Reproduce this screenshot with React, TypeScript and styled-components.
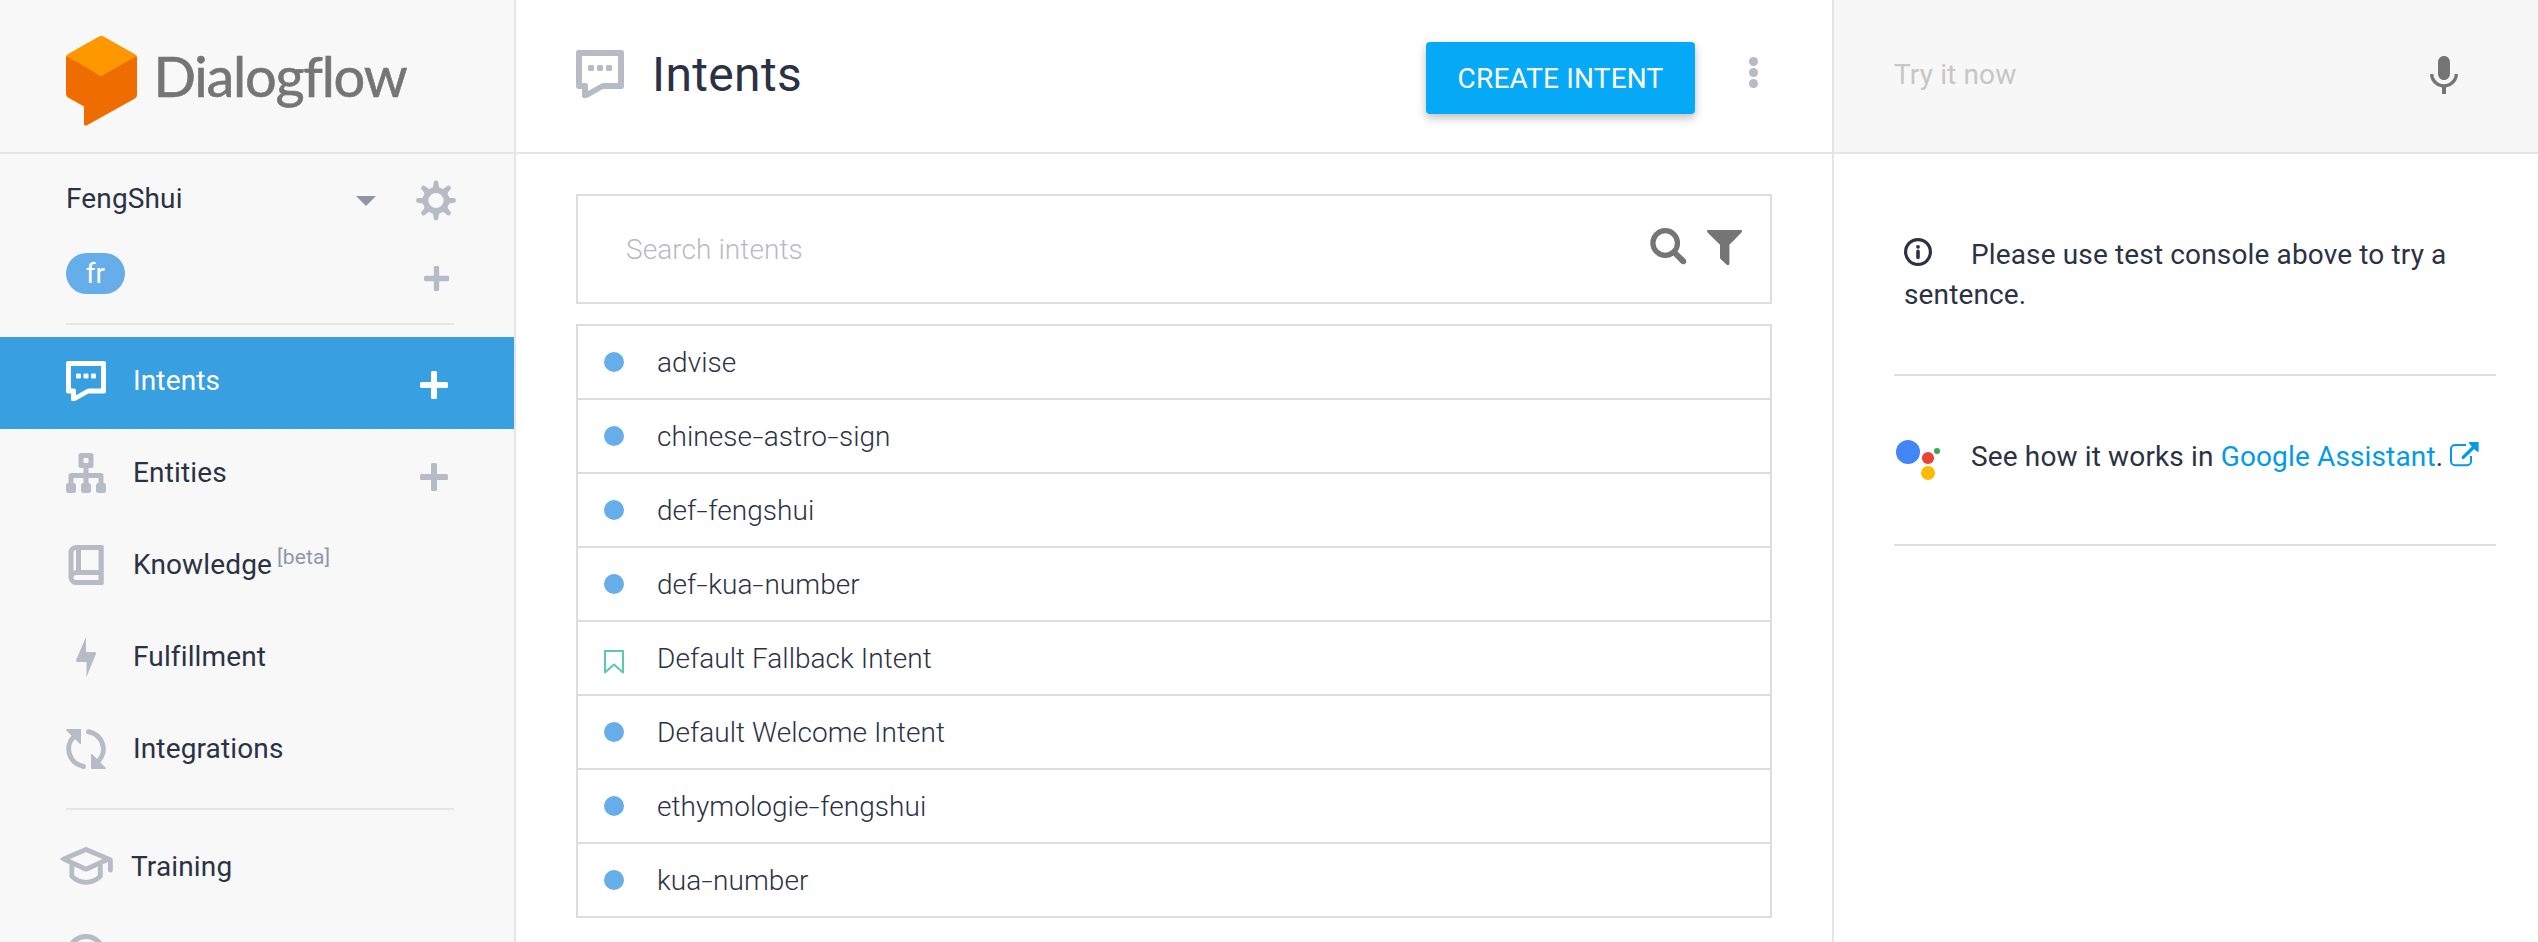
import React from "react";
import styled, { createGlobalStyle } from "styled-components";

const GlobalStyle = createGlobalStyle`
  *, *::before, *::after { box-sizing: border-box; }
  body { margin: 0; background: #fff; overflow: hidden; }
  #root { font-family: Roboto, "Liberation Sans", sans-serif; font-size: 28px; letter-spacing: 0.14px; color: #2b3244; }
  svg { display: block; flex: none; }
`;

const Page = styled.div`
  display: grid;
  grid-template-columns: 516px 1318px 1fr;
  height: 942px;
  overflow: hidden;
`;

const Column = styled.div<{ $tint?: boolean; $edge?: boolean }>`
  display: flex;
  flex-direction: column;
  min-width: 0;
  height: 942px;
  overflow: hidden;
  background: ${(p) => (p.$tint ? "#f8f8f8" : "#fff")};
  border-right: ${(p) => (p.$edge ? "2px solid #e5e5e5" : "none")};
`;

const Header = styled.header<{ $tint?: boolean }>`
  display: flex;
  flex: none;
  height: 154px;
  border-bottom: 2px solid #e5e5e5;
  background: ${(p) => (p.$tint ? "#f7f7f7" : "transparent")};
`;

/* Sidebar */
const Brand = styled.div`
  display: flex;
  align-items: flex-start;
  padding: 35px 0 0 66px;
`;
const BrandName = styled.span`
  font-family: Lato, sans-serif;
  font-size: 56px;
  line-height: 68px;
  letter-spacing: -1.25px;
  color: #757575;
  margin: 7px 0 0 16.5px;
  -webkit-text-stroke: 0.6px #757575;
`;
const Agent = styled.div`
  display: flex;
  flex: none;
  height: 99px;
  padding: 26px 58px 0 66px;
`;
const AgentName = styled.span`
  flex: 1;
  line-height: 37px;
`;
const Caret = styled.span`
  width: 0;
  height: 0;
  margin: 16px 40px 0 0;
  border: 10px solid transparent;
  border-top-color: #8f96aa;
  border-bottom-width: 0;
`;
const Language = styled.div`
  display: flex;
  flex: none;
  justify-content: space-between;
  margin: 0 60px 0 66px;
  padding-right: 5.5px;
  height: 72px;
  border-bottom: 2px solid #e5e5e5;
`;
const Pill = styled.span`
  width: 59px;
  height: 41px;
  border-radius: 20.5px;
  background: #66aee9;
  color: #fff;
  line-height: 41px;
  text-align: center;
`;
const LanguageAdd = styled.span`
  margin-top: 13px;
  color: #b7bbc6;
`;
const Nav = styled.nav`
  display: flex;
  flex-direction: column;
  flex: none;
  padding-top: 12px;
`;
const NavItem = styled.a<{ $active?: boolean }>`
  display: flex;
  align-items: flex-start;
  flex: none;
  height: 92px;
  padding: 24px 66px 0 66px;
  color: ${(p) => (p.$active ? "#fff" : "#2b3244")};
  background: ${(p) => (p.$active ? "#389fe0" : "transparent")};
  > svg { color: ${(p) => (p.$active ? "#fff" : "#b7bbc6")}; }
`;
const NavLabel = styled.span<{ $tight?: boolean }>`
  flex: 1;
  margin-left: ${(p) => (p.$tight ? 18 : 27)}px;
  line-height: 39px;
  white-space: nowrap;
`;
const Beta = styled.sup`
  margin-left: 5px;
  font-size: 21px;
  line-height: 0;
  vertical-align: 10px;
  color: #8f96ae;
`;
const Add = styled.span<{ $active?: boolean }>`
  margin: 10px 0 0;
  color: ${(p) => (p.$active ? "#fff" : "#b7bbc6")};
`;
const WideIcon = styled.span`
  margin: 0 0 0 -6px;
  color: #b7bbc6;
`;
const RaisedIcon = styled.span`
  margin-top: -5px;
  color: #b7bbc6;
`;
const NavRule = styled.hr`
  flex: none;
  width: 388px;
  height: 2px;
  margin: 11px 0 13px 66px;
  border: 0;
  background: #e5e5e5;
`;

/* Intents panel */
const Title = styled.h1`
  flex: 1;
  margin: 0 0 0 28px;
  padding-top: 47px;
  font-size: 48px;
  font-weight: 400;
  line-height: 56px;
  letter-spacing: 0.35px;
`;
const HeaderIcon = styled.span`
  margin: 50px 0 0 60px;
  color: #b7bbc6;
`;
const CreateButton = styled.button`
  width: 269px;
  height: 72px;
  margin-top: 42px;
  padding: 1px 0 0;
  border: 0;
  border-radius: 4px;
  background: #05a9f6;
  box-shadow: 0 4px 10px rgba(0, 0, 0, 0.26);
  color: #fff;
  font: inherit;
  letter-spacing: 0.18px;
`;
const Menu = styled.span`
  display: flex;
  flex-direction: column;
  gap: 2.3px;
  margin: 56.5px 74px 0 54px;
`;
const MenuDot = styled.i`
  width: 9px;
  height: 9px;
  border-radius: 50%;
  background: #b7bbc6;
`;
const SearchBox = styled.div`
  display: flex;
  flex: none;
  width: 1196px;
  height: 110px;
  margin: 40px 0 20px 60px;
  padding: 32px 28px 0 48px;
  border: 2px solid #dedede;
  color: #757575;
`;
const Placeholder = styled.span`
  flex: 1;
  margin-top: 3px;
  font-weight: 300;
  line-height: 37px;
  letter-spacing: 0.08px;
  color: #b7bbc6;
`;
const FilterSlot = styled.span`
  margin: 2px 0 0 20px;
`;
const List = styled.ul`
  flex: none;
  width: 1196px;
  margin: 0 0 0 60px;
  padding: 0;
  list-style: none;
  border: 2px solid #dcdcdc;
`;
const Row = styled.li`
  display: flex;
  align-items: center;
  height: 74px;
  padding-left: 26px;
  font-weight: 300;
  letter-spacing: 0.04px;
  border-bottom: 2px solid #dcdcdc;
  &:last-child { height: 72px; border-bottom: 0; }
`;
const Marker = styled.span<{ $low?: boolean }>`
  display: flex;
  width: 20px;
  margin: ${(p) => (p.$low ? 8 : 0)}px 33px 0 0;
`;
const Dot = styled.i`
  width: 20px;
  height: 20px;
  border-radius: 50%;
  background: #66aee9;
`;
const Hyphen = styled.span`
  display: inline-block;
  margin: 0 1.9px;
  transform: scaleX(1.45);
`;

/* Test console */
const TryField = styled.div`
  flex: 1;
  padding: 56px 0 0 60px;
  line-height: 37px;
  color: #c6c6c6;
`;
const MicSlot = styled.span`
  margin: 56px 80px 0 0;
  color: #757575;
`;
const Hint = styled.p`
  flex: none;
  width: 602px;
  height: 222px;
  margin: 0 0 0 60px;
  padding: 81px 20px 0 10px;
  line-height: 40px;
  border-bottom: 2px solid #dedede;
  > svg { display: inline-block; vertical-align: -2px; margin-right: 39px; }
`;
const Assistant = styled.div`
  display: flex;
  flex: none;
  width: 602px;
  height: 170px;
  margin-left: 60px;
  padding: 64px 0 0 2px;
  border-bottom: 2px solid #dedede;
`;
const AssistantText = styled.span`
  width: 479px;
  margin: -2px 0 0 30px;
  line-height: 37px;
  white-space: nowrap;
`;
const Link = styled.a`
  color: #039be5;
`;
const ExternalSlot = styled.span`
  margin: 2px 0 0;
  color: #039be5;
`;

const ChatIcon = ({ size = 40 }: { size?: number }) => (
  <svg width={size} height={size} viewBox="0 0 16 16" fill="currentColor">
    <path fillRule="evenodd" d="M.8 0H15.2a.8.8 0 0 1 .8.8V12.2a.8.8 0 0 1-.8.8H9L4 15.8Q2 16.6 2 15.2V13H.8a.8.8 0 0 1-.8-.8V.8A.8.8 0 0 1 .8 0zM2 2V11H3.2Q4 11 4 11.8V13.7L8.2 11.3Q8.7 11 9.3 11H14V2z" />
    <rect x="4" y="5" width="2" height="2" rx=".5" />
    <rect x="7" y="5" width="2" height="2" rx=".5" />
    <rect x="10" y="5" width="2" height="2" rx=".5" />
  </svg>
);

const TreeIcon = () => (
  <svg width="40" height="40" viewBox="0 0 16 16" fill="currentColor">
    <path fillRule="evenodd" d="M6 0H10a1 1 0 0 1 1 1V5a1 1 0 0 1-1 1H9V8H14a1 1 0 0 1 1 1V12a1 1 0 0 1 1 1V15a1 1 0 0 1-1 1H13a1 1 0 0 1-1-1V13a1 1 0 0 1 1-1V10H9V12a1 1 0 0 1 1 1V15a1 1 0 0 1-1 1H7a1 1 0 0 1-1-1V13a1 1 0 0 1 1-1V10H3V12a1 1 0 0 1 1 1V15a1 1 0 0 1-1 1H1a1 1 0 0 1-1-1V13a1 1 0 0 1 1-1V9a1 1 0 0 1 1-1H7V6H6a1 1 0 0 1-1-1V1a1 1 0 0 1 1-1zM7.4 2A.4.4 0 0 0 7 2.4V3.6A.4.4 0 0 0 7.4 4H8.6A.4.4 0 0 0 9 3.6V2.4A.4.4 0 0 0 8.6 2z" />
  </svg>
);

const BookIcon = () => (
  <svg width="40" height="40" viewBox="0 0 16 16" fill="currentColor">
    <path fillRule="evenodd" d="M4 0H14.4a.7.7 0 0 1 .7.7V15.3a.7.7 0 0 1-.7.7H4a3 3 0 0 1-3-3V3a3 3 0 0 1 3-3zM4 2A1 1 0 0 0 3 3V10.2L4 10zM6 2V10H13V2zM4 12A1 1 0 0 0 4 14H13V12z" />
  </svg>
);

const BoltIcon = () => (
  <svg width="40" height="40" viewBox="0 0 16 16" fill="currentColor">
    <path d="M8 0V6H11.4A.6.6 0 0 1 11.95 6.9L8.2 16V10H4.6A.6.6 0 0 1 4.05 9.2z" />
  </svg>
);

const SyncIcon = () => (
  <svg width="40" height="40" viewBox="0 0 16 16" fill="currentColor">
    <path d="M.3 0H5.7Q6 0 6 .3V5.7Q6 6.2 5.5 5.9L.2 .6Q-.2 .1 .3 0zM15.7 16H10.3Q10 16 10 15.7V10.3Q10 9.8 10.5 10.1L15.8 15.4Q16.2 15.9 15.7 16z" />
    <path fill="none" stroke="currentColor" strokeWidth="2" d="M3.3 2.9A7 7 0 0 0 7.1 14.94M12.7 13.1A7 7 0 0 0 8.9 1.06" />
    <circle cx="7" cy="14.95" r="1" />
    <circle cx="9" cy="1.05" r="1" />
  </svg>
);

const CapIcon = () => (
  <svg width="53" height="38" viewBox="0 0 53 38" fill="none" stroke="currentColor" strokeWidth="4.8">
    <path strokeLinejoin="round" d="M3.8 12L26 2.5L48.5 12L26 22.2z" />
    <path fill="currentColor" stroke="none" d="M.5 11.2L9 7.8V15.6L.5 12.8Q-.5 12 .5 11.2z" />
    <path strokeLinecap="round" d="M50.4 13V23.2" />
    <path d="M11.8 17.5V29.2Q17.5 35.3 26 35.3T40.3 29.2V17.5" />
  </svg>
);

const HistoryIcon = () => (
  <svg width="40" height="40" viewBox="0 0 40 40" fill="none" stroke="currentColor" strokeWidth="5">
    <circle cx="20" cy="20" r="17.5" />
    <path d="M20 10V21L27 25" />
  </svg>
);

const PlusIcon = ({ size = 28 }: { size?: number }) => (
  <svg width={size} height={size} viewBox="0 0 28 28" fill="currentColor">
    <rect x="0" y="11" width="28" height="6" rx="1.5" />
    <rect x="11" y="0" width="6" height="28" rx="1.5" />
  </svg>
);

const GearIcon = () => (
  <svg width="40" height="41" viewBox="-20 -20.5 40 41" fill="none" stroke="#b7bbc6">
    <circle r="10.4" strokeWidth="5.6" />
    {[0, 45, 90, 135, 180, 225, 270, 315].map((a) => (
      <g key={a} transform={`rotate(${a})`}>
        <path d="M0-11V-17.6" strokeWidth="4.8" strokeLinecap="round" />
        <path d="M-5.6-11.6Q-2.4-12.6-2.4-16.2H2.4Q2.4-12.6 5.6-11.6z" fill="#b7bbc6" stroke="none" />
      </g>
    ))}
  </svg>
);

const Logo = () => (
  <svg width="71" height="91" viewBox="0 0 71 91">
    <path fill="#ef6c00" d="M0 22.5Q0 20 2 20L35 41 69 20Q71 20 71 22.5V60Q71 62 69 63.5L21 90.3Q18 91.5 18 89V71.5L2 62.5Q0 61 0 59z" />
    <path fill="#ff9800" d="M33.5 1.2Q35.3 .3 37.1 1.2L68.6 19Q71 20.6 69.8 21.4L35.3 41 1 21.4Q-.2 20.6 2 19z" />
  </svg>
);

const SearchIcon = () => (
  <svg width="37" height="37" viewBox="0 0 37 37" fill="none" stroke="currentColor">
    <circle cx="15.2" cy="15" r="12.3" strokeWidth="5.2" />
    <path d="M23.5 23.5L33.6 33.6" strokeWidth="5.8" />
    <path d="M31.5 31.5L33.5 33.5" strokeWidth="5.4" strokeLinecap="round" />
  </svg>
);

const FilterIcon = () => (
  <svg width="35" height="35" viewBox="0 0 35 35" fill="currentColor">
    <path d="M1 0H34Q35 0 35 1T34 2.9L22.4 14.8V34Q22.4 35 21.4 35H20.8Q20 35 19.4 34.4L13.6 28.9Q13 28.4 13 27.5V14.8L1 2.9Q0 2 0 1T1 0z" />
  </svg>
);

const BookmarkIcon = () => (
  <svg width="20" height="24" viewBox="0 0 20 24" fill="none" stroke="#5cc8ad" strokeWidth="2" strokeLinejoin="round">
    <path d="M1 1H19V22.4L10 14.6L1 22.4z" />
  </svg>
);

const MicIcon = () => (
  <svg width="28" height="38" viewBox="5 2 14 19" fill="currentColor">
    <path d="M12 14c1.66 0 2.99-1.34 2.99-3L15 5c0-1.66-1.34-3-3-3S9 3.34 9 5v6c0 1.66 1.34 3 3 3zm5.3-3c0 3-2.54 5.1-5.3 5.1S6.7 14 6.7 11H5c0 3.41 2.72 6.23 6 6.72V21h2v-3.28c3.28-.48 6-3.3 6-6.72h-1.7z" />
  </svg>
);

const InfoIcon = () => (
  <svg width="28" height="28" viewBox="0 0 28 28" fill="none" stroke="currentColor">
    <circle cx="14" cy="14" r="12.4" strokeWidth="3.2" />
    <path d="M14 13.4V19.4" strokeWidth="3.6" strokeLinecap="round" />
    <circle cx="14" cy="8.8" r="1.9" fill="currentColor" stroke="none" />
  </svg>
);

const AssistantIcon = () => (
  <svg width="45" height="40" viewBox="0 0 45 40">
    <circle cx="12" cy="12" r="12" fill="#4285f4" />
    <circle cx="32" cy="18" r="6.1" fill="#ea4335" />
    <circle cx="32" cy="33" r="7" fill="#fbbc05" />
    <circle cx="41" cy="11" r="3" fill="#34a853" />
  </svg>
);

const ExternalIcon = () => (
  <svg width="29" height="25" viewBox="0 0 29 25" fill="none" stroke="currentColor">
    <path strokeWidth="2" d="M16 3H5A4 4 0 0 0 1 7V19.2A4 4 0 0 0 5 23.2H17A4 4 0 0 0 21 19.2V14" />
    <path strokeWidth="3.4" strokeLinecap="round" d="M13.2 15.4L23 5.8" />
    <path fill="currentColor" stroke="none" d="M18.4 0H28.6V10.2L25.4 8.2L20.4 3z" />
  </svg>
);

const intents = [
  "advise",
  "chinese-astro-sign",
  "def-fengshui",
  "def-kua-number",
  "Default Fallback Intent",
  "Default Welcome Intent",
  "ethymologie-fengshui",
  "kua-number",
];

const IntentName = ({ name }: { name: string }) => (
  <span>
    {name.split("-").map((part, i) => (
      <React.Fragment key={i}>
        {i > 0 && <Hyphen>-</Hyphen>}
        {part}
      </React.Fragment>
    ))}
  </span>
);

const IntentRow = ({ name }: { name: string }) => {
  const fallback = name === "Default Fallback Intent";
  return (
    <Row>
      <Marker $low={fallback}>{fallback ? <BookmarkIcon /> : <Dot />}</Marker>
      <IntentName name={name} />
    </Row>
  );
};

export default function App() {
  return (
    <>
      <GlobalStyle />
      <Page>
        <Column $tint $edge>
          <Header>
            <Brand>
              <Logo />
              <BrandName>Dialogflow</BrandName>
            </Brand>
          </Header>
          <Agent>
            <AgentName>FengShui</AgentName>
            <Caret />
            <GearIcon />
          </Agent>
          <Language>
            <Pill>fr</Pill>
            <LanguageAdd>
              <PlusIcon size={25} />
            </LanguageAdd>
          </Language>
          <Nav>
            <NavItem $active>
              <ChatIcon />
              <NavLabel>Intents</NavLabel>
              <Add $active>
                <PlusIcon />
              </Add>
            </NavItem>
            <NavItem>
              <TreeIcon />
              <NavLabel>Entities</NavLabel>
              <Add>
                <PlusIcon />
              </Add>
            </NavItem>
            <NavItem>
              <BookIcon />
              <NavLabel>
                Knowledge<Beta>[beta]</Beta>
              </NavLabel>
            </NavItem>
            <NavItem>
              <BoltIcon />
              <NavLabel>Fulfillment</NavLabel>
            </NavItem>
            <NavItem>
              <SyncIcon />
              <NavLabel>Integrations</NavLabel>
            </NavItem>
            <NavRule />
            <NavItem>
              <WideIcon>
                <CapIcon />
              </WideIcon>
              <NavLabel $tight>Training</NavLabel>
            </NavItem>
            <NavItem>
              <RaisedIcon>
                <HistoryIcon />
              </RaisedIcon>
            </NavItem>
          </Nav>
        </Column>

        <Column $edge>
          <Header>
            <HeaderIcon>
              <ChatIcon size={48} />
            </HeaderIcon>
            <Title>Intents</Title>
            <CreateButton>CREATE INTENT</CreateButton>
            <Menu>
              <MenuDot />
              <MenuDot />
              <MenuDot />
            </Menu>
          </Header>
          <SearchBox>
            <Placeholder>Search intents</Placeholder>
            <SearchIcon />
            <FilterSlot>
              <FilterIcon />
            </FilterSlot>
          </SearchBox>
          <List>
            {intents.map((name) => (
              <IntentRow key={name} name={name} />
            ))}
          </List>
        </Column>

        <Column>
          <Header $tint>
            <TryField>Try it now</TryField>
            <MicSlot>
              <MicIcon />
            </MicSlot>
          </Header>
          <Hint>
            <InfoIcon />
            Please use test console above to try a sentence.
          </Hint>
          <Assistant>
            <AssistantIcon />
            <AssistantText>
              See how it works in <Link>Google Assistant</Link>.
            </AssistantText>
            <ExternalSlot>
              <ExternalIcon />
            </ExternalSlot>
          </Assistant>
        </Column>
      </Page>
    </>
  );
}
